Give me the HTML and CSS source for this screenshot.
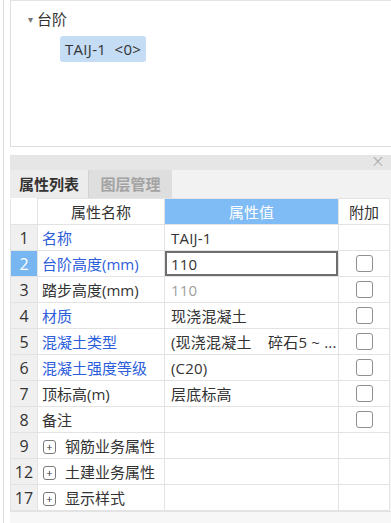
FILE: index.html
```html
<!DOCTYPE html>
<html lang="zh-CN">
<head>
    <meta charset="UTF-8">
    <title>台阶属性</title>
    <link rel="stylesheet" href="styles.css">
</head>
<body>
    <div class="frame">
        <div class="tree-panel">
            <div class="tree-node">
                <span class="caret">▾</span>
                <span>台阶</span>
            </div>
            <div class="tree-leaf">
                <span class="leaf-label">TAIJ-1&nbsp;&nbsp;&lt;0&gt;</span>
            </div>
        </div>

        <div class="prop-panel">
            <div class="panel-bar">
                <span class="close">×</span>
            </div>
            <div class="tabs">
                <div class="tab active">属性列表</div>
                <div class="tab">图层管理</div>
            </div>

            <table class="props">
                <colgroup>
                    <col class="c-num">
                    <col class="c-name">
                    <col class="c-value">
                    <col class="c-extra">
                </colgroup>
                <thead>
                    <tr>
                        <th class="num"></th>
                        <th>属性名称</th>
                        <th class="hl">属性值</th>
                        <th>附加</th>
                    </tr>
                </thead>
                <tbody>
                    <tr>
                        <td class="num">1</td>
                        <td class="name blue">名称</td>
                        <td class="value">TAIJ-1</td>
                        <td></td>
                    </tr>
                    <tr>
                        <td class="num sel">2</td>
                        <td class="name blue">台阶高度(mm)</td>
                        <td class="value editing">110</td>
                        <td><span class="check"></span></td>
                    </tr>
                    <tr>
                        <td class="num">3</td>
                        <td class="name">踏步高度(mm)</td>
                        <td class="value muted">110</td>
                        <td><span class="check"></span></td>
                    </tr>
                    <tr>
                        <td class="num">4</td>
                        <td class="name blue">材质</td>
                        <td class="value">现浇混凝土</td>
                        <td><span class="check"></span></td>
                    </tr>
                    <tr>
                        <td class="num">5</td>
                        <td class="name blue">混凝土类型</td>
                        <td class="value">(现浇混凝土&nbsp;&nbsp;&nbsp; 碎石5 ~ ...</td>
                        <td><span class="check"></span></td>
                    </tr>
                    <tr>
                        <td class="num">6</td>
                        <td class="name blue">混凝土强度等级</td>
                        <td class="value">(C20)</td>
                        <td><span class="check"></span></td>
                    </tr>
                    <tr>
                        <td class="num">7</td>
                        <td class="name">顶标高(m)</td>
                        <td class="value">层底标高</td>
                        <td><span class="check"></span></td>
                    </tr>
                    <tr>
                        <td class="num">8</td>
                        <td class="name">备注</td>
                        <td class="value"></td>
                        <td><span class="check"></span></td>
                    </tr>
                    <tr>
                        <td class="num">9</td>
                        <td class="name"><span class="plus">+</span>钢筋业务属性</td>
                        <td></td>
                        <td></td>
                    </tr>
                    <tr>
                        <td class="num">12</td>
                        <td class="name"><span class="plus">+</span>土建业务属性</td>
                        <td></td>
                        <td></td>
                    </tr>
                    <tr>
                        <td class="num">17</td>
                        <td class="name"><span class="plus">+</span>显示样式</td>
                        <td></td>
                        <td></td>
                    </tr>
                </tbody>
            </table>
            <div class="filler"></div>
        </div>
    </div>
</body>
</html>
```

FILE: styles.css
```css
body {
    margin: 0;
    background: #fff;
    font-family: "Open Sans", "Noto Sans CJK SC", sans-serif;
    font-size: 15px;
    color: #333;
}
.frame {
    margin-left: 3px;
    border-left: 1px solid #dcdcdc;
    padding-left: 6px;
    height: 523px;
    width: 381px;
}
.tree-panel {
    height: 147px;
    border: 1px solid #dedede;
    border-top: 1px solid #e4e4e4;
    border-right: none;
    box-sizing: border-box;
    padding: 8px 0 0 17px;
}
.tree-node {
    display: flex;
    align-items: center;
    gap: 4px;
    height: 20px;
    line-height: 20px;
}
.caret {
    font-size: 10px;
    color: #777;
}
.tree-leaf {
    padding: 7px 0 0 32px;
}
.leaf-label {
    display: inline-block;
    background: #c4dcf4;
    border-radius: 3px;
    padding: 0 5px;
    height: 26px;
    line-height: 26px;
    letter-spacing: 0.3px;
}
.prop-panel {
    margin-top: 8px;
    background: #f7f7f7;
}
.panel-bar {
    height: 15px;
    background: #e6e6e6;
    position: relative;
}
.close {
    position: absolute;
    right: 6px;
    top: -4px;
    font-size: 17px;
    font-family: "DejaVu Sans", sans-serif;
    font-weight: 200;
    color: #a8a8a8;
}
.tabs {
    display: flex;
    height: 28px;
    background: #f2f2f2;
}
.tab {
    width: 78px;
    box-sizing: border-box;
    text-align: center;
    line-height: 28px;
    font-weight: bold;
    color: #a3a3a3;
    background: #dedede;
    border-left: 1px solid #d2d2d2;
}
.tab.active {
    color: #333;
    background: #ececec;
    border-left: none;
}
.tab + .tab {
    width: 84px;
}
.props {
    border-collapse: collapse;
    table-layout: fixed;
    width: 379px;
    background: #fff;
}
.c-num { width: 27px; }
.c-name { width: 127px; }
.c-value { width: 174px; }
.c-extra { width: 51px; }
.props th,
.props td {
    border: 1px solid #e3e3e3;
    height: 25px;
    padding: 0;
    white-space: nowrap;
    overflow: hidden;
}
.props th {
    font-weight: normal;
    text-align: center;
}
.props th.hl {
    background: #7fbbf4;
    color: #fff;
}
.props td.num {
    background: #f0f0f0;
    text-align: center;
    font-size: 16px;
}
.props th.num {
    background: #fff;
    border-top-color: #fff;
}
.props td.sel {
    background: #78b6f2;
    color: #fff;
}
.name {
    padding-left: 4px !important;
}
.blue {
    color: #2c5edb;
}
.value {
    padding-left: 6px !important;
    letter-spacing: 0.2px;
}
.editing {
    box-shadow: inset 0 0 0 2px #6e6e6e;
}
.muted {
    color: #a0a0a0;
}
.check {
    display: block;
    width: 15px;
    height: 15px;
    margin: 0 auto;
    border: 1px solid #8f8f8f;
    border-radius: 3px;
}
.plus {
    display: inline-block;
    width: 11px;
    height: 12px;
    line-height: 11px;
    border: 1px solid #7a7a7a;
    border-radius: 3px;
    text-align: center;
    font-size: 11px;
    margin: 0 9px 0 1px;
    vertical-align: 1px;
}
.filler {
    height: 12px;
    border-top: 1px solid #e3e3e3;
    background: #f7f7f7;
}
```
